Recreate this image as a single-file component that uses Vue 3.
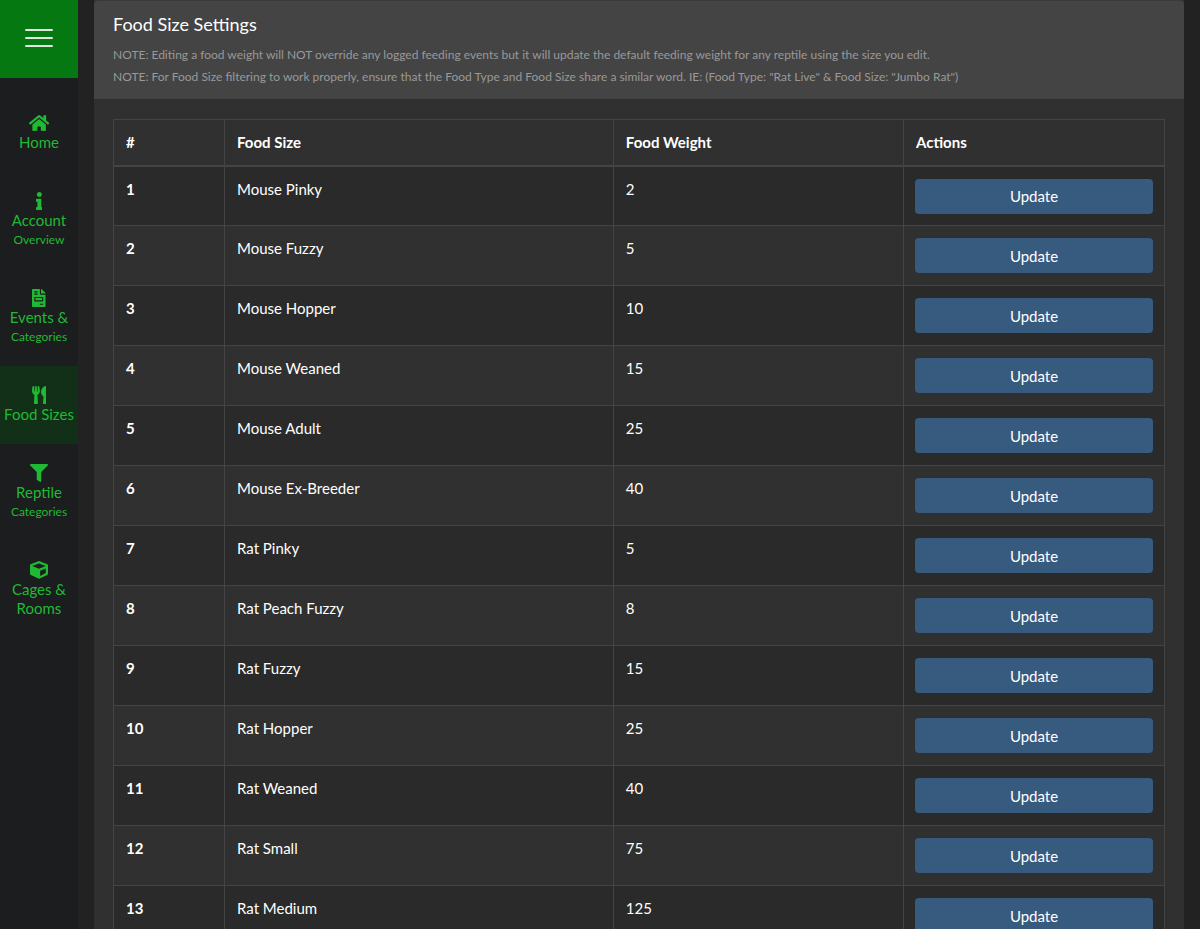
<script setup>
const navItems = [
  {
    label: 'Home',
    viewBox: '0 0 576 512',
    path: 'M280.37 148.26L96 300.11V464a16 16 0 0 0 16 16l112.06-.29a16 16 0 0 0 15.92-16V368a16 16 0 0 1 16-16h64a16 16 0 0 1 16 16v95.64a16 16 0 0 0 16 16.05L464 480a16 16 0 0 0 16-16V300L295.67 148.26a12.19 12.19 0 0 0-15.3 0zM571.6 251.47L488 182.56V44.05a12 12 0 0 0-12-12h-56a12 12 0 0 0-12 12v72.61L318.47 43a48 48 0 0 0-61 0L4.34 251.47a12 12 0 0 0-1.6 16.9l25.5 31A12 12 0 0 0 45.15 301l235.22-193.74a12.19 12.19 0 0 1 15.3 0L530.9 301a12 12 0 0 0 16.9-1.6l25.5-31a12 12 0 0 0-1.7-16.93z'
  },
  {
    label: 'Account',
    sub: 'Overview',
    viewBox: '0 0 192 512',
    path: 'M20 424.229h20V279.771H20c-11.046 0-20-8.954-20-20V212c0-11.046 8.954-20 20-20h112c11.046 0 20 8.954 20 20v212.229h20c11.046 0 20 8.954 20 20V492c0 11.046-8.954 20-20 20H20c-11.046 0-20-8.954-20-20v-47.771c0-11.046 8.954-20 20-20zM96 0C56.235 0 24 32.235 24 72s32.235 72 72 72 72-32.235 72-72S135.764 0 96 0z'
  },
  {
    label: 'Events &',
    sub: 'Categories',
    viewBox: '0 0 384 512',
    path: 'M288 256H96v64h192v-64zm89-151L279.1 7c-4.5-4.5-10.6-7-17-7H256v128h128v-6.1c0-6.3-2.5-12.4-7-16.9zm-153 31V0H24C10.7 0 0 10.7 0 24v464c0 13.3 10.7 24 24 24h336c13.3 0 24-10.7 24-24V160H248c-13.2 0-24-10.8-24-24zM64 72c0-4.42 3.58-8 8-8h80c4.42 0 8 3.58 8 8v16c0 4.42-3.58 8-8 8H72c-4.42 0-8-3.58-8-8V72zm0 64c0-4.42 3.58-8 8-8h80c4.42 0 8 3.58 8 8v16c0 4.42-3.58 8-8 8H72c-4.42 0-8-3.58-8-8v-16zm256 304c0 4.42-3.58 8-8 8h-80c-4.42 0-8-3.58-8-8v-16c0-4.42 3.58-8 8-8h80c4.42 0 8 3.58 8 8v16zm0-200v96c0 8.84-7.16 16-16 16H80c-8.84 0-16-7.16-16-16v-96c0-8.84 7.16-16 16-16h224c8.84 0 16 7.16 16 16z'
  },
  {
    label: 'Food Sizes',
    active: true,
    viewBox: '0 0 416 512',
    path: 'M207.9 15.2c.8 4.7 16.1 94.5 16.1 128.8 0 52.3-27.8 89.6-68.9 104.6L168 486.7c.7 13.7-10.2 25.3-24 25.3H80c-13.7 0-24.7-11.5-24-25.3l12.9-238.1C27.7 233.6 0 196.2 0 144 0 109.6 15.3 19.9 16.1 15.2 19.3-5.1 61.4-5.4 64 16.3v141.2c1.3 3.4 15.1 3.2 16 0 1.4-25.3 7.9-139.2 8-141.8 3.3-20.8 44.7-20.8 47.9 0 .2 2.7 6.6 116.5 8 141.8.9 3.2 14.8 3.4 16 0V16.3c2.6-21.6 44.8-21.4 48-1.1zm119.2 285.7l-15 185.1c-1.2 14 9.9 26 23.9 26h56c13.3 0 24-10.7 24-24V24c0-13.2-10.7-24-24-24-82.5 0-221.4 178.5-64.9 300.9z'
  },
  {
    label: 'Reptile',
    sub: 'Categories',
    viewBox: '0 0 512 512',
    path: 'M487.976 0H24.028C2.71 0-8.047 25.866 7.058 40.971L192 225.941V432c0 7.831 3.821 15.17 10.237 19.662l80 55.98C298.02 518.69 320 507.493 320 487.98V225.941l184.947-184.97C520.021 25.896 509.338 0 487.976 0z'
  },
  {
    label: 'Cages & Rooms',
    viewBox: '0 0 512 512',
    path: 'M239.1 6.3l-208 78c-18.7 7-31.1 25-31.1 45v225.1c0 18.2 10.3 34.8 26.5 42.9l208 104c13.5 6.8 29.4 6.8 42.9 0l208-104c16.3-8.1 26.5-24.8 26.5-42.9V129.3c0-20-12.4-37.9-31.1-44.9l-208-78C262 2.2 250 2.2 239.1 6.3zM256 68.4l192 72v1.1l-192 78-192-78v-1.1l192-72zm32 356V275.5l160-65v133.9l-160 80z'
  }
]

const foods = [
  ['Mouse Pinky', 2],
  ['Mouse Fuzzy', 5],
  ['Mouse Hopper', 10],
  ['Mouse Weaned', 15],
  ['Mouse Adult', 25],
  ['Mouse Ex-Breeder', 40],
  ['Rat Pinky', 5],
  ['Rat Peach Fuzzy', 8],
  ['Rat Fuzzy', 15],
  ['Rat Hopper', 25],
  ['Rat Weaned', 40],
  ['Rat Small', 75],
  ['Rat Medium', 125]
]
</script>

<template>
  <div class="page">
    <aside class="sidebar">
      <button class="menu" type="button" aria-label="Menu">
        <svg width="28" height="20" viewBox="0 0 28 20" fill="none" stroke="#e0e8e0" stroke-width="2" stroke-linecap="round">
          <path d="M1 2h26M1 10h26M1 18h26" />
        </svg>
      </button>
      <nav class="nav">
        <a v-for="item in navItems" :key="item.label" href="#" class="item" :class="{ active: item.active }">
          <svg class="icon" :viewBox="item.viewBox" fill="currentColor" aria-hidden="true">
            <path :d="item.path" />
          </svg>
          <span class="label">{{ item.label }}</span>
          <span v-if="item.sub" class="sub">{{ item.sub }}</span>
        </a>
      </nav>
    </aside>

    <main class="card">
      <header class="card-head">
        <h1>Food Size Settings</h1>
        <p>NOTE: Editing a food weight will NOT override any logged feeding events but it will update the default feeding weight for any reptile using the size you edit.</p>
        <p>NOTE: For Food Size filtering to work properly, ensure that the Food Type and Food Size share a similar word. IE: (Food Type: "Rat Live" &amp; Food Size: "Jumbo Rat")</p>
      </header>
      <div class="card-body">
        <table>
          <colgroup>
            <col class="c-num" />
            <col class="c-size" />
            <col class="c-weight" />
            <col class="c-act" />
          </colgroup>
          <thead>
            <tr>
              <th scope="col">#</th>
              <th scope="col">Food Size</th>
              <th scope="col">Food Weight</th>
              <th scope="col">Actions</th>
            </tr>
          </thead>
          <tbody>
            <tr v-for="(food, i) in foods" :key="food[0]">
              <th scope="row">{{ i + 1 }}</th>
              <td>{{ food[0] }}</td>
              <td>{{ food[1] }}</td>
              <td><button class="update" type="button">Update</button></td>
            </tr>
          </tbody>
        </table>
      </div>
    </main>
  </div>
</template>

<style>
html {
  background: #222;
}
body {
  margin: 0;
}
</style>

<style scoped>
.page {
  display: flex;
  gap: 16px;
  height: 100vh;
  padding-right: 16px;
  box-sizing: border-box;
  overflow: hidden;
  background: #222;
  color: #fff;
  font-family: Lato, "Liberation Sans", sans-serif;
  font-size: 15px;
}
.sidebar {
  flex: 0 0 78px;
  background: #1b1d1e;
}
.menu {
  display: flex;
  align-items: center;
  justify-content: center;
  width: 100%;
  height: 78px;
  padding: 0 0 2px;
  border: 0;
  background: #067811;
}
.nav {
  padding-top: 16px;
}
.item {
  display: flex;
  flex-direction: column;
  align-items: center;
  padding: 20px 0;
  color: #20b934;
  text-align: center;
  text-decoration: none;
}
.item.active {
  background: #123018;
}
.icon {
  display: block;
  height: 18px;
  margin-bottom: 1px;
}
.label,
.sub {
  line-height: 19px;
}
.label {
  padding: 0 4px;
  font-size: 15px;
}
.sub {
  font-size: 12px;
}
.card {
  flex: 1;
  min-width: 0;
  background: #303030;
}
.card-head {
  padding: 11px 19px;
  border-top: 1px solid #3a3a3a;
  background: #444;
  border-radius: 4px 4px 0 0;
}
h1 {
  margin: 0 0 8px;
  font-size: 18px;
  font-weight: 400;
  line-height: 24px;
}
p {
  margin: 0;
  color: #999;
  font-size: 12px;
  line-height: 22px;
}
.card-body {
  padding: 20px 19px;
}
table {
  width: 100%;
  table-layout: fixed;
  border-collapse: collapse;
}
.c-num {
  width: 111px;
}
.c-size {
  width: 37%;
}
.c-act {
  width: 261px;
}
th,
td {
  box-sizing: border-box;
  padding: 12px 12px 0;
  border: 1px solid #444;
  text-align: left;
  vertical-align: top;
  line-height: 20px;
}
td:last-child {
  padding-right: 11px;
  padding-left: 11px;
}
thead th {
  height: 46px;
  border-bottom-width: 2px;
}
tbody tr {
  height: 60px;
}
tbody tr:nth-child(odd) {
  background: #2a2a2a;
}
.update {
  display: block;
  width: 100%;
  height: 35px;
  padding: 0;
  border: 0;
  border-radius: 4px;
  background: #375a7f;
  color: #fff;
  font: inherit;
}
</style>
